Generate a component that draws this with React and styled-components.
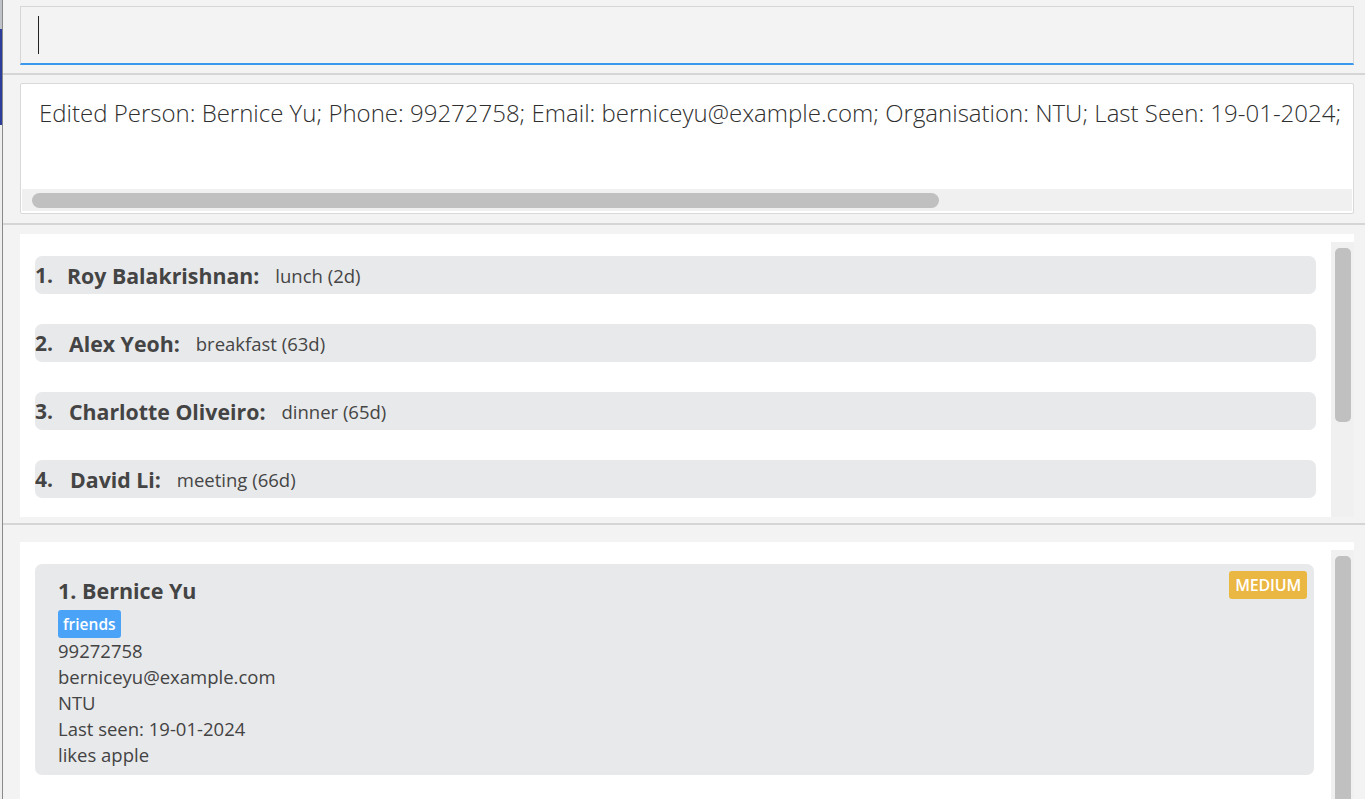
import React from 'react';
import styled, { createGlobalStyle } from 'styled-components';

const GlobalStyle = createGlobalStyle`
    html, body {
        margin: 0;
        padding: 0;
        background: #f3f3f3;
        font-family: "Open Sans", "Noto Sans", sans-serif;
        color: #434343;
        overflow: hidden;
    }
`

const Window = styled.div`
    display: flex;
    height: 799px;
    width: 1365px;
`

const Backdrop = styled.div`
    width: 2px;
    flex: none;
    background: linear-gradient(
        to bottom,
        #bfc3c9 0px, #bfc3c9 29px,
        #2c3e9a 29px, #2c3e9a 125px,
        #eeeeee 125px
    );
    border-right: 1px solid #8a8a8a;
`

const Main = styled.div`
    flex: 1;
    display: flex;
    flex-direction: column;
    min-width: 0;
`

const Section = styled.div`
    padding: ${p => p.$pad};
    flex: ${p => (p.$grow ? 1 : 'none')};
    height: ${p => p.$h || 'auto'};
    box-sizing: border-box;
    display: flex;
    flex-direction: column;
    min-height: 0;
`

const Divider = styled.div`
    height: 2px;
    background: #d5d5d5;
    flex: none;
`

const CommandBox = styled.div`
    height: 56px;
    background: #f3f3f3;
    border: 1px solid #d6d6d6;
    border-bottom: 2px solid #3b97ec;
    display: flex;
    align-items: center;
    padding-left: 17px;
`

const Caret = styled.div`
    width: 1px;
    height: 38px;
    background: #222;
`

const ResultBox = styled.div`
    height: 129px;
    background: #fff;
    border: 1px solid #d9d9d9;
    border-radius: 2px;
    display: flex;
    flex-direction: column;
    overflow: hidden;
`

const ResultText = styled.div`
    flex: 1;
    padding: 12px 0 0 18px;
    font-size: 24px;
    font-weight: 300;
    color: #2f2f2f;
    white-space: nowrap;
`

const HTrack = styled.div`
    height: 22px;
    margin: 0 1px 2px 1px;
    background: #f0f0f0;
    display: flex;
    align-items: center;
    padding-left: 10px;
`

const HThumb = styled.div`
    height: 15px;
    width: 907px;
    background: #c0c0c0;
    border-radius: 8px;
`

const Panel = styled.div`
    background: #fff;
    display: flex;
    flex: 1;
    min-height: 0;
    overflow: hidden;
`

const ListArea = styled.div`
    flex: 1;
    display: flex;
    flex-direction: column;
    gap: ${p => p.$gap}px;
    padding: ${p => p.$top}px 15px 0 15px;
`

const VTrack = styled.div`
    width: 23px;
    flex: none;
    margin-top: 8px;
    background: #f0f0f0;
    display: flex;
    justify-content: center;
`

const VThumb = styled.div`
    width: 16px;
    margin-top: 6px;
    height: ${p => p.$h};
    background: #c0c0c0;
    border-radius: 5px;
`

const ReminderRow = styled.div`
    height: 38px;
    background: #e8e9eb;
    border-radius: 7px;
    display: flex;
    align-items: center;
    white-space: nowrap;
`

const RowIndex = styled.span`
    font-size: 21px;
    font-weight: 700;
    color: #444;
    width: ${p => p.$w}px;
`

const RowName = styled.span`
    font-size: 21.3px;
    font-weight: 700;
    color: #444;
    margin-right: 16px;
`

const RowNote = styled.span`
    font-size: 18.5px;
    color: #454545;
`

const PersonCard = styled.div`
    position: relative;
    background: #e8e9eb;
    border-radius: 7px;
    height: 211px;
    margin-right: 2px;
    padding: 13px 23px 0 23px;
    box-sizing: border-box;
    display: flex;
    flex-direction: column;
`

const CardName = styled.div`
    font-size: 21.5px;
    font-weight: 700;
    color: #444;
    line-height: 28px;
`

const Tag = styled.span`
    align-self: flex-start;
    background: #4ba3f8;
    color: #fff;
    font-size: 15.5px;
    font-weight: 600;
    line-height: 28px;
    padding: 0 5px;
    border-radius: 3px;
    margin: 5px 0 0 0;
`

const Field = styled.div`
    font-size: 18.5px;
    line-height: 26px;
    color: #434343;
`

const Priority = styled.span`
    position: absolute;
    top: 7px;
    right: 7px;
    background: #ebb743;
    color: #fff;
    font-size: 16px;
    font-weight: 600;
    line-height: 28px;
    padding: 0 6px;
    border-radius: 3px;
    letter-spacing: -0.2px;
`

const reminders = [
    { name: 'Roy Balakrishnan:', note: 'lunch (2d)', w: 32 },
    { name: 'Alex Yeoh:', note: 'breakfast (63d)', w: 34 },
    { name: 'Charlotte Oliveiro:', note: 'dinner (65d)', w: 34 },
    { name: 'David Li:', note: 'meeting (66d)', w: 35 },
];

const App = () => {
    return (
        <>
            <GlobalStyle />
            <Window>
                <Backdrop />
                <Main>
                    <Section $pad="6px 11px 8px 17px">
                        <CommandBox>
                            <Caret />
                        </CommandBox>
                    </Section>
                    <Divider />
                    <Section $pad="8px 11px 9px 17px">
                        <ResultBox>
                            <ResultText>
                                Edited Person: Bernice Yu; Phone: 99272758; Email: berniceyu@example.com; Organisation: NTU; Last Seen: 19-01-2024;
                            </ResultText>
                            <HTrack>
                                <HThumb />
                            </HTrack>
                        </ResultBox>
                    </Section>
                    <Divider />
                    <Section $pad="9px 11px 6px 17px" $h="298px">
                        <Panel>
                            <ListArea $gap={30} $top={22}>
                                {reminders.map((r, i) => (
                                    <ReminderRow key={r.name}>
                                        <RowIndex $w={r.w}>{i + 1}.</RowIndex>
                                        <RowName>{r.name}</RowName>
                                        <RowNote>{r.note}</RowNote>
                                    </ReminderRow>
                                ))}
                            </ListArea>
                            <VTrack>
                                <VThumb $h="174px" />
                            </VTrack>
                        </Panel>
                    </Section>
                    <Divider />
                    <Section $pad="17px 11px 0 17px" $grow>
                        <Panel>
                            <ListArea $gap={0} $top={22}>
                                <PersonCard>
                                    <CardName>1.&nbsp;Bernice Yu</CardName>
                                    <Tag>friends</Tag>
                                    <Field>99272758</Field>
                                    <Field>berniceyu@example.com</Field>
                                    <Field>NTU</Field>
                                    <Field>Last seen: 19-01-2024</Field>
                                    <Field>likes apple</Field>
                                    <Priority>MEDIUM</Priority>
                                </PersonCard>
                            </ListArea>
                            <VTrack>
                                <VThumb $h="300px" />
                            </VTrack>
                        </Panel>
                    </Section>
                </Main>
            </Window>
        </>
    );
};

export default App;
